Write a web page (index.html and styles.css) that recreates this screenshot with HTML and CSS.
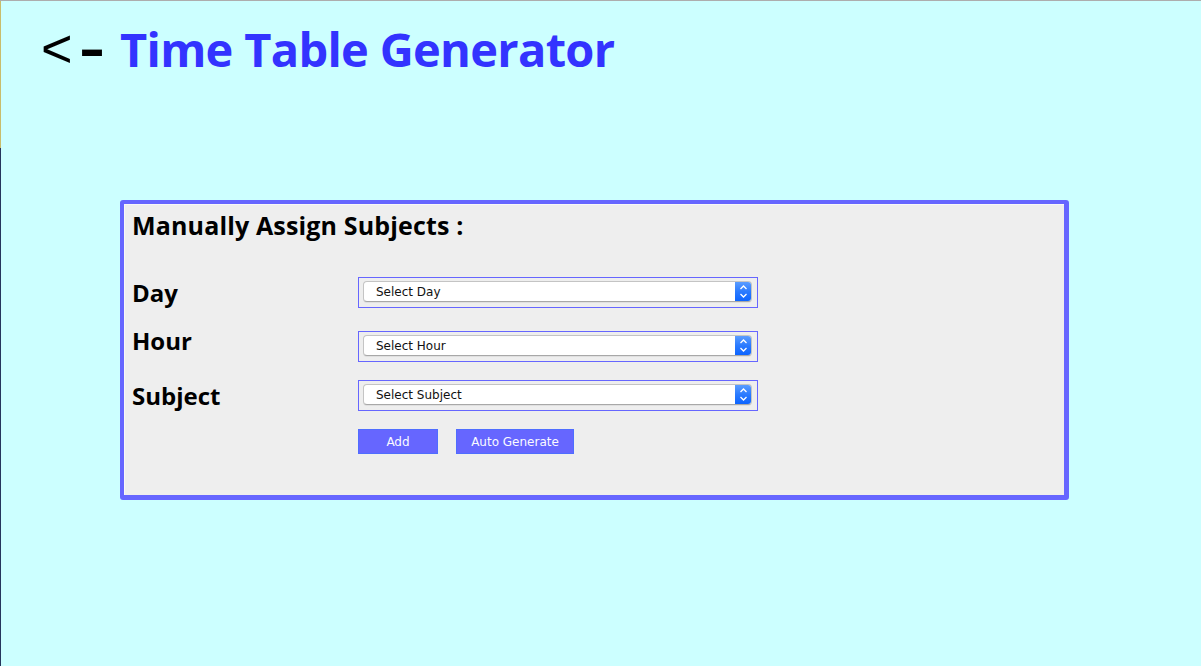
FILE: index.html
```html
<!DOCTYPE html>
<html lang="en">
<head>
<meta charset="utf-8">
<title>Time Table Generator</title>
<link rel="stylesheet" href="styles.css">
</head>
<body>
  <header class="top-bar">
    <h1 class="app-title"><span class="back-link">&lt;<span class="back-dash">-</span></span><span class="title-text">Time Table Generator</span></h1>
  </header>

  <main class="panel">
    <h2 class="panel-heading">Manually Assign Subjects :</h2>

    <div class="form-row row-day">
      <label class="field-label">Day</label>
      <div class="select-box">
        <div class="select-pill">
          <span class="select-text">Select Day</span>
          <span class="select-arrow"><svg width="17" height="21" viewBox="0 0 17 21"><polyline points="5.5,8 8.5,5 11.5,8" fill="none" stroke="#fff" stroke-width="1.3"/><polyline points="5.5,13 8.5,16 11.5,13" fill="none" stroke="#fff" stroke-width="1.3"/></svg></span>
        </div>
      </div>
    </div>

    <div class="form-row row-hour">
      <label class="field-label">Hour</label>
      <div class="select-box">
        <div class="select-pill">
          <span class="select-text">Select Hour</span>
          <span class="select-arrow"><svg width="17" height="21" viewBox="0 0 17 21"><polyline points="5.5,8 8.5,5 11.5,8" fill="none" stroke="#fff" stroke-width="1.3"/><polyline points="5.5,13 8.5,16 11.5,13" fill="none" stroke="#fff" stroke-width="1.3"/></svg></span>
        </div>
      </div>
    </div>

    <div class="form-row row-subject">
      <label class="field-label">Subject</label>
      <div class="select-box">
        <div class="select-pill">
          <span class="select-text">Select Subject</span>
          <span class="select-arrow"><svg width="17" height="21" viewBox="0 0 17 21"><polyline points="5.5,8 8.5,5 11.5,8" fill="none" stroke="#fff" stroke-width="1.3"/><polyline points="5.5,13 8.5,16 11.5,13" fill="none" stroke="#fff" stroke-width="1.3"/></svg></span>
        </div>
      </div>
    </div>

    <div class="button-row">
      <button class="action-btn btn-add">Add</button>
      <button class="action-btn btn-auto">Auto Generate</button>
    </div>
  </main>
</body>
</html>
```

FILE: styles.css
```css
html {
  margin: 0;
  min-height: 100%;
  background:
    linear-gradient(#adadad, #adadad) top left / 100% 1px no-repeat,
    linear-gradient(#c9bd6b 0 148px, #26365c 148px) top left / 1px 100% no-repeat,
    #ccffff;
}

body {
  margin: 0;
  min-height: 666px;
}

.top-bar {
  padding-top: 16px;
  padding-left: 41px;
}

.app-title {
  margin: 0;
  display: flex;
  align-items: baseline;
  height: 64px;
  line-height: 64px;
}

.back-link {
  font-family: "Liberation Sans", Arial, sans-serif;
  font-size: 54px;
  font-weight: 400;
  color: #000;
  width: 79px;
  white-space: nowrap;
}

.back-dash {
  display: inline-block;
  font-weight: 700;
  margin-left: 6px;
  transform: scaleX(1.45);
  transform-origin: left center;
}

.title-text {
  font-family: "Open Sans", "Liberation Sans", sans-serif;
  font-size: 47px;
  font-weight: 700;
  letter-spacing: -0.7px;
  color: #3333ff;
}

.panel {
  box-sizing: border-box;
  margin: 120px 0 0 120px;
  width: 949px;
  height: 300px;
  background: #eeeeee;
  border-style: solid;
  border-color: #6666ff;
  border-width: 4px 5px 5px 4px;
  border-radius: 3px;
  box-shadow: inset 1px 1px 0 #f8f8f8;
  padding: 4px 8px 0 8px;
  font-family: "Open Sans", "Liberation Sans", sans-serif;
  color: #000;
}

.panel-heading {
  margin: 0;
  font-size: 25px;
  line-height: 34px;
  font-weight: 700;
  letter-spacing: 0.15px;
}

.form-row {
  display: flex;
  align-items: center;
  height: 31px;
}

.row-day { margin-top: 35px; }
.row-hour { margin-top: 23px; }
.row-subject { margin-top: 18px; }

.field-label {
  width: 226px;
  font-size: 24px;
  line-height: 33px;
  font-weight: 700;
}

.row-hour .field-label { margin-top: -12px; }

.select-box {
  box-sizing: border-box;
  width: 400px;
  height: 31px;
  border: 1px solid #6666ff;
  padding: 3px 5px 5px 4px;
}

.select-pill {
  box-sizing: border-box;
  height: 21px;
  display: flex;
  align-items: center;
  background: #fff;
  border: 1px solid #c4c4c4;
  border-bottom-color: #a8a8a8;
  border-radius: 4px;
  box-shadow: 0 1px 0 rgba(0, 0, 0, 0.06);
  overflow: hidden;
}

.select-text {
  flex: 1;
  padding-left: 12px;
  font-family: "DejaVu Sans", sans-serif;
  font-size: 12px;
  color: #111;
}

.select-arrow {
  width: 17px;
  height: 21px;
  margin: -1px -1px -1px 0;
  background: linear-gradient(#5fa0ff, #2b7bff 50%, #0a62ff);
  border-radius: 0 4px 4px 0;
  display: flex;
}

.button-row {
  display: flex;
  gap: 18px;
  margin-top: 18px;
  padding-left: 226px;
}

.action-btn {
  box-sizing: border-box;
  height: 25px;
  margin: 0;
  padding: 0;
  background: #6666ff;
  border: 1px solid #4f6dff;
  color: #fafaff;
  font-family: "DejaVu Sans", sans-serif;
  font-size: 12px;
}

.btn-add { width: 80px; }
.btn-auto { width: 118px; }
```
